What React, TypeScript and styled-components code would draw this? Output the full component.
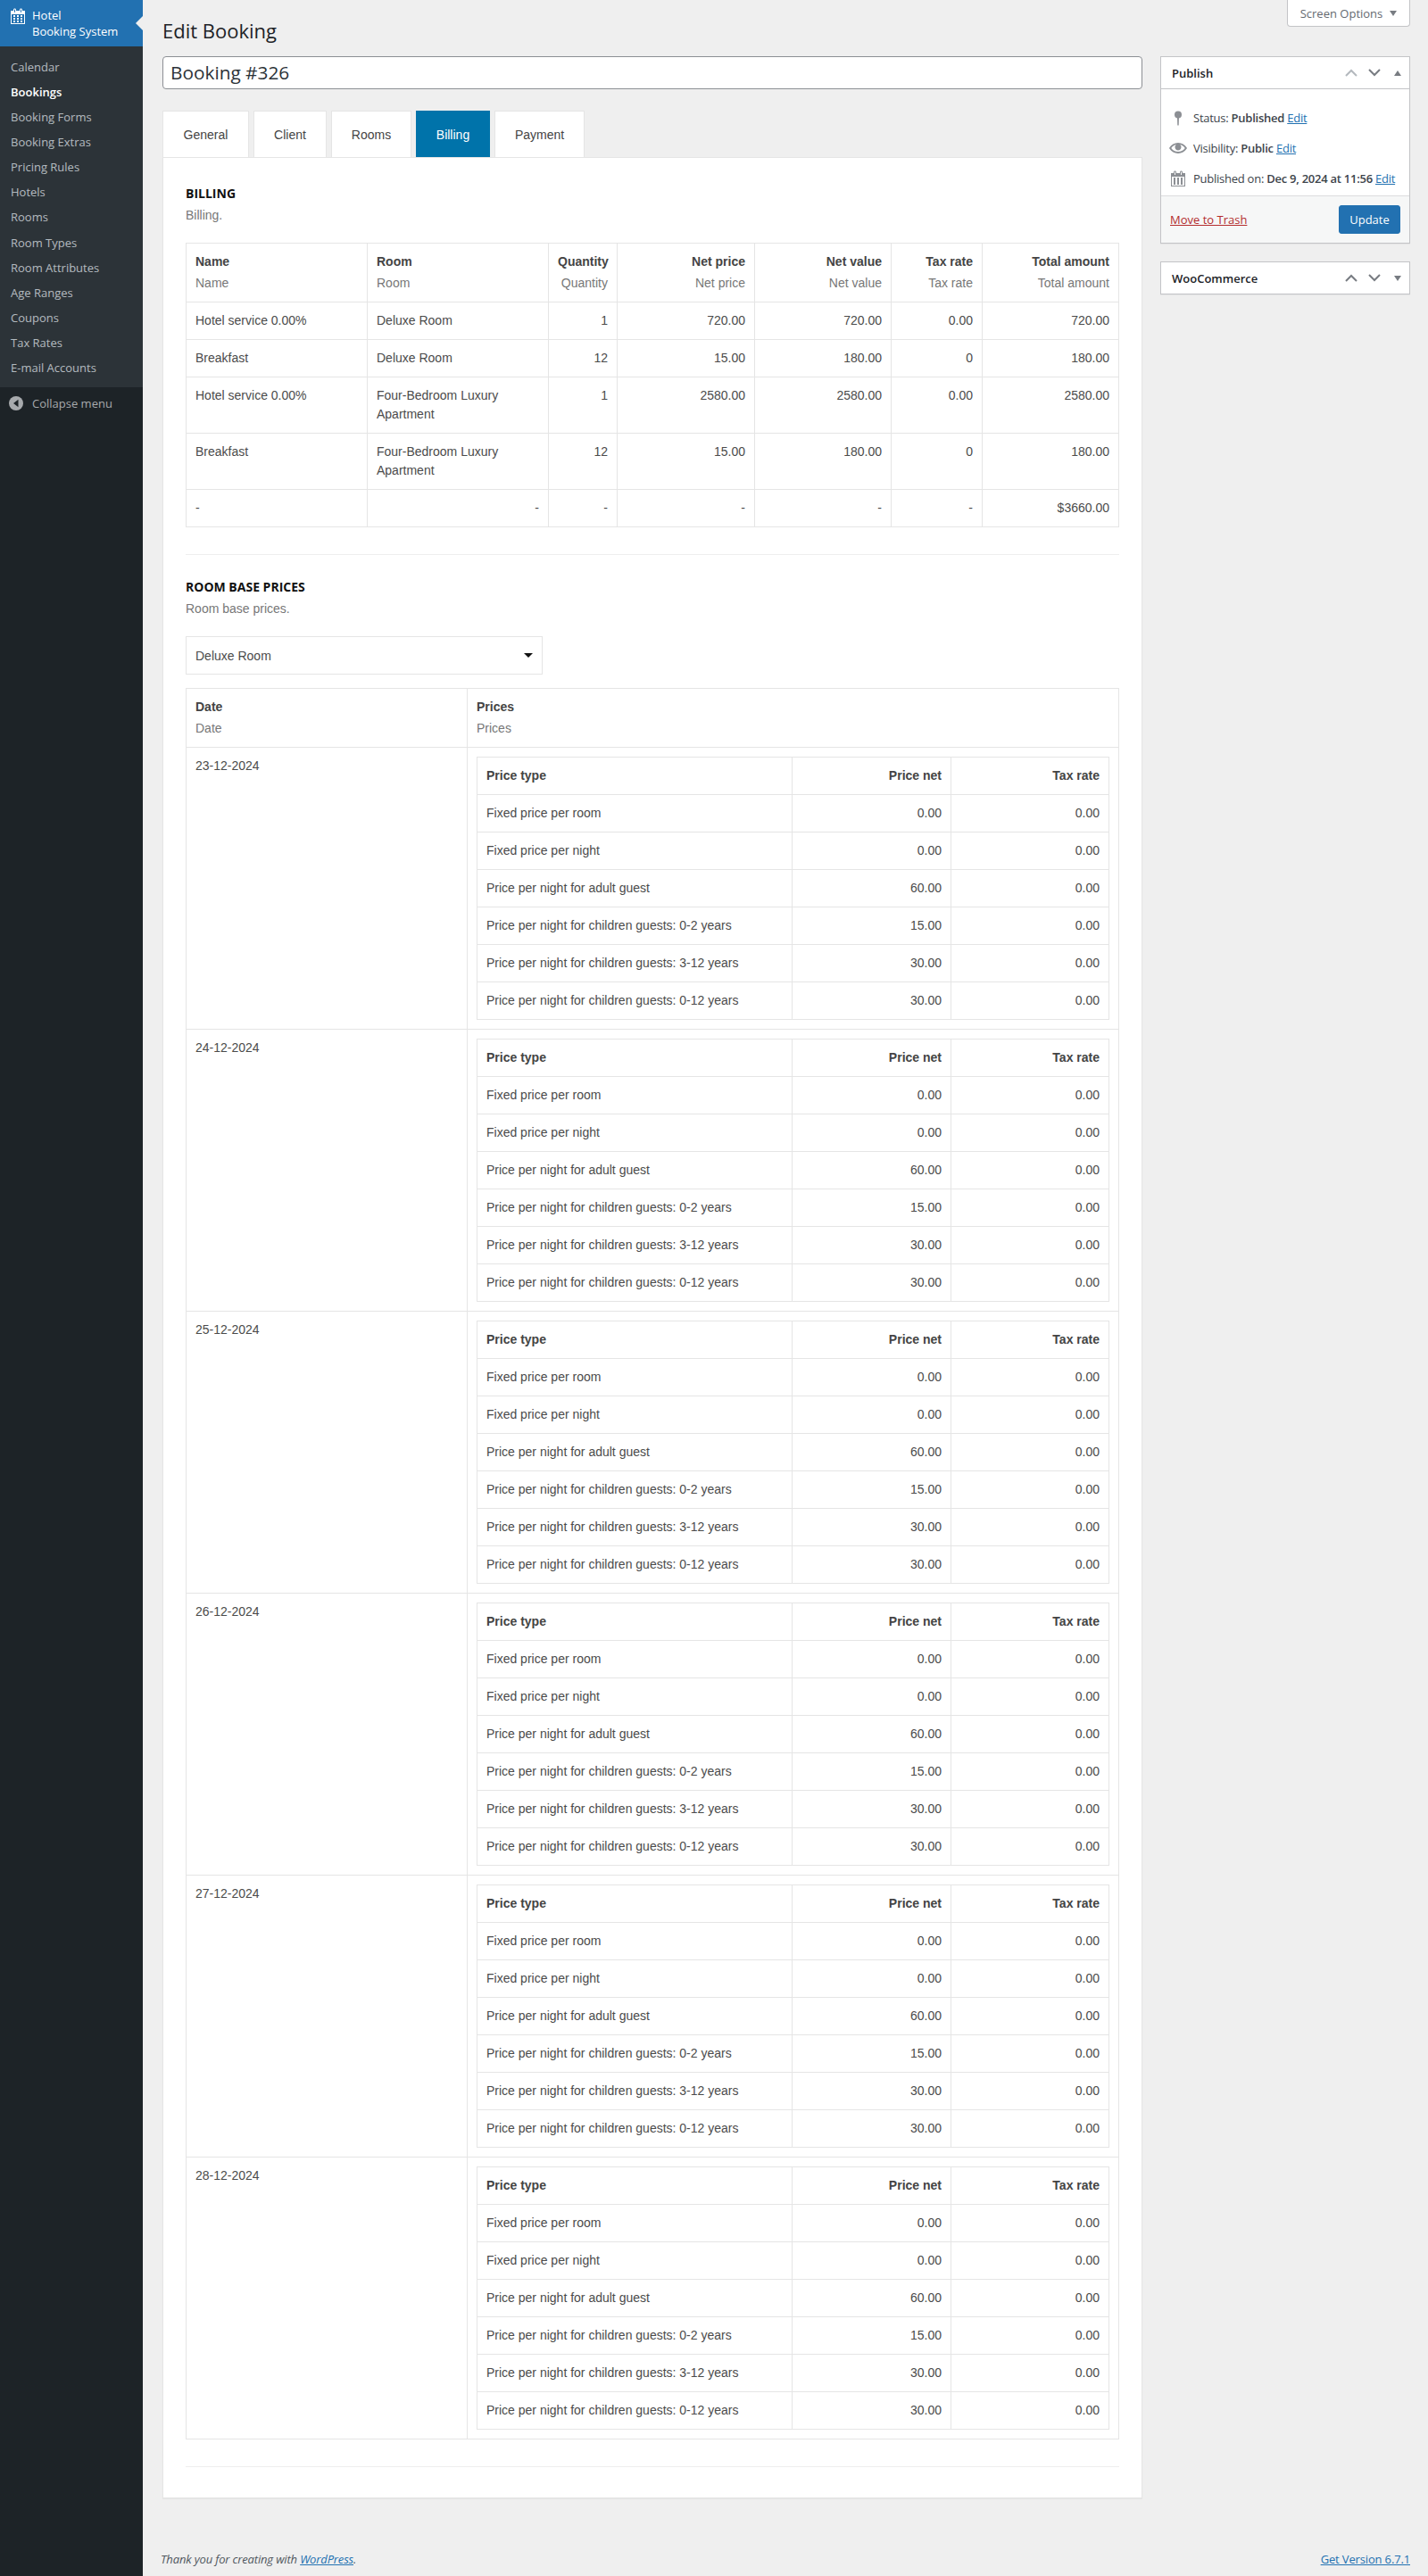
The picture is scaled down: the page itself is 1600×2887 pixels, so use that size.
import React from "react";
import styled, { createGlobalStyle } from "styled-components";

const OPEN = `"Open Sans", "Noto Sans", sans-serif`;
const ARIAL = `"Liberation Sans", Arial, sans-serif`;

const GlobalStyle = createGlobalStyle`
  html, body { margin: 0; padding: 0; background: #efefef; }
  body { font-family: ${OPEN}; font-size: 13px; color: #3c434a; }
  * { box-sizing: border-box; }
  a { color: #2271b1; }
`;

const menuItems = [
  "Calendar",
  "Bookings",
  "Booking Forms",
  "Booking Extras",
  "Pricing Rules",
  "Hotels",
  "Rooms",
  "Room Types",
  "Room Attributes",
  "Age Ranges",
  "Coupons",
  "Tax Rates",
  "E-mail Accounts",
];

const billingRows = [
  ["Hotel service 0.00%", "Deluxe Room", "1", "720.00", "720.00", "0.00", "720.00"],
  ["Breakfast", "Deluxe Room", "12", "15.00", "180.00", "0", "180.00"],
  ["Hotel service 0.00%", "Four-Bedroom Luxury Apartment", "1", "2580.00", "2580.00", "0.00", "2580.00"],
  ["Breakfast", "Four-Bedroom Luxury Apartment", "12", "15.00", "180.00", "0", "180.00"],
  ["-", "-", "-", "-", "-", "-", "$3660.00"],
];

const billingHead = ["Name", "Room", "Quantity", "Net price", "Net value", "Tax rate", "Total amount"];
const billingWidths = [203, 203, 77, 154, 153, 102, 153];

const priceRows = [
  ["Fixed price per room", "0.00", "0.00"],
  ["Fixed price per night", "0.00", "0.00"],
  ["Price per night for adult guest", "60.00", "0.00"],
  ["Price per night for children guests: 0-2 years", "15.00", "0.00"],
  ["Price per night for children guests: 3-12 years", "30.00", "0.00"],
  ["Price per night for children guests: 0-12 years", "30.00", "0.00"],
];

const dates = ["23-12-2024", "24-12-2024", "25-12-2024", "26-12-2024", "27-12-2024", "28-12-2024"];

function CalendarIcon({ size, color }: { size: number; color: string }) {
  return (
    <svg width={size} height={size} viewBox="0 0 20 20" fill={color}>
      <path d="M15 4h3v15H2V4h3V3c0-.41.15-.76.44-1.06.29-.29.65-.44 1.06-.44s.77.15 1.06.44c.29.3.44.65.44 1.06v1h4V3c0-.41.15-.76.44-1.06.29-.29.65-.44 1.06-.44s.77.15 1.06.44c.29.3.44.65.44 1.06v1zM6 3v2.5c0 .14.05.26.15.36.09.09.21.14.35.14s.26-.05.35-.14c.1-.1.15-.22.15-.36V3c0-.14-.05-.26-.15-.35-.09-.1-.21-.15-.35-.15s-.26.05-.35.15c-.1.09-.15.21-.15.35zm7 0v2.5c0 .14.05.26.14.36.1.09.22.14.36.14s.26-.05.36-.14c.09-.1.14-.22.14-.36V3c0-.14-.05-.26-.14-.35-.1-.1-.22-.15-.36-.15s-.26.05-.36.15c-.09.09-.14.21-.14.35zm4 15V8H3v10h14zM7 9v2H5V9h2zm2 0h2v2H9V9zm4 2V9h2v2h-2zm-6 1v2H5v-2h2zm2 0h2v2H9v-2zm4 2v-2h2v2h-2zm-6 1v2H5v-2h2zm4 2H9v-2h2v2zm4 0h-2v-2h2v2z" />
    </svg>
  );
}

function Chevron({ up, faded }: { up?: boolean; faded?: boolean }) {
  return (
    <svg width="14" height="9" viewBox="0 0 14 9" fill="none">
      <path
        d={up ? "M1 8l6-6 6 6" : "M1 1l6 6 6-6"}
        stroke={faded ? "#b4b9be" : "#787c82"}
        strokeWidth="2"
      />
    </svg>
  );
}

function Caret({ up, width = 8 }: { up?: boolean; width?: number }) {
  const x = (width - 8) / 2;
  return (
    <svg width={width} height="6" viewBox={`${-x} 0 ${width} 6`} fill="#787c82">
      <path d={up ? "M0 6l4-6 4 6z" : "M0 0l4 6 4-6z"} />
    </svg>
  );
}

export default function App() {
  return (
    <Page>
      <GlobalStyle />
      <Sidebar>
        <ActiveMenu>
          <CalendarIcon size={20} color="#fff" />
          <div>
            Hotel
            <br />
            Booking System
          </div>
        </ActiveMenu>
        <SubMenu>
          {menuItems.map((item) => (
            <SubItem key={item} $current={item === "Bookings"}>
              {item}
            </SubItem>
          ))}
        </SubMenu>
        <Collapse>
          <svg width="16" height="16" viewBox="0 0 16 16">
            <circle cx="8" cy="8" r="8" fill="#a7aaad" />
            <path d="M10.5 3.8v8.4L5 8z" fill="#1d2327" />
          </svg>
          <span>Collapse menu</span>
        </Collapse>
      </Sidebar>

      <Main>
        <ScreenOptionsRow>
          <ScreenOptions>
            Screen Options
            <Caret />
          </ScreenOptions>
        </ScreenOptionsRow>
        <Columns>
          <Content>
            <Heading>Edit Booking</Heading>
            <TitleInput>Booking #326</TitleInput>
            <Tabs>
              <Tab $width={97}>General</Tab>
              <Tab $width={82}>Client</Tab>
              <Tab $width={90}>Rooms</Tab>
              <Tab $width={83} $active>Billing</Tab>
              <Tab $width={101}>Payment</Tab>
            </Tabs>
            <Panel>
              <SectionTitle>BILLING</SectionTitle>
              <SectionNote>Billing.</SectionNote>
              <DataTable>
                <colgroup>
                  {billingWidths.map((w, i) => (
                    <col key={i} style={{ width: w }} />
                  ))}
                </colgroup>
                <thead>
                  <tr>
                    {billingHead.map((h, i) => (
                      <HeadCell key={h} $right={i > 1}>
                        <strong>{h}</strong>
                        <small>{h}</small>
                      </HeadCell>
                    ))}
                  </tr>
                </thead>
                <tbody>
                  {billingRows.map((row, r) => (
                    <tr key={r}>
                      {row.map((c, i) => (
                        <Cell key={i} $right={i > 1 || (r === 4 && i === 1)}>
                          {c}
                        </Cell>
                      ))}
                    </tr>
                  ))}
                </tbody>
              </DataTable>
              <Divider />
              <SectionTitle>ROOM BASE PRICES</SectionTitle>
              <SectionNote>Room base prices.</SectionNote>
              <RoomSelect>
                Deluxe Room
                <svg width="10" height="5" viewBox="0 0 10 5" fill="#111">
                  <path d="M0 0h10L5 5z" />
                </svg>
              </RoomSelect>
              <DataTable>
                <colgroup>
                  <col style={{ width: 315 }} />
                  <col />
                </colgroup>
                <thead>
                  <tr>
                    <HeadCell>
                      <strong>Date</strong>
                      <small>Date</small>
                    </HeadCell>
                    <HeadCell>
                      <strong>Prices</strong>
                      <small>Prices</small>
                    </HeadCell>
                  </tr>
                </thead>
                <tbody>
                  {dates.map((d) => (
                    <tr key={d}>
                      <Cell>{d}</Cell>
                      <Cell>
                        <DataTable>
                          <colgroup>
                            <col />
                            <col style={{ width: 178 }} />
                            <col style={{ width: 177 }} />
                          </colgroup>
                          <thead>
                            <tr>
                              <Cell as="th">Price type</Cell>
                              <Cell as="th" $right>Price net</Cell>
                              <Cell as="th" $right>Tax rate</Cell>
                            </tr>
                          </thead>
                          <tbody>
                            {priceRows.map((p) => (
                              <tr key={p[0]}>
                                <Cell>{p[0]}</Cell>
                                <Cell $right>{p[1]}</Cell>
                                <Cell $right>{p[2]}</Cell>
                              </tr>
                            ))}
                          </tbody>
                        </DataTable>
                      </Cell>
                    </tr>
                  ))}
                </tbody>
              </DataTable>
              <Divider />
            </Panel>
          </Content>
          <Side>
            <Box>
              <BoxHeader>
                <BoxTitle>Publish</BoxTitle>
                <BoxControls>
                  <Chevron up faded />
                  <Chevron />
                  <Caret up width={14} />
                </BoxControls>
              </BoxHeader>
              <BoxBody>
                <MetaRow>
                  <MetaIcon>
                    <svg width="20" height="20" viewBox="0 0 20 20" fill="#8c8f94">
                      <circle cx="10" cy="6.5" r="4" />
                      <path d="M9 9h2l-.3 9.5h-1.4z" />
                    </svg>
                  </MetaIcon>
                  <span>
                    Status: <b>Published</b> <a href="#e">Edit</a>
                  </span>
                </MetaRow>
                <MetaRow>
                  <MetaIcon>
                    <svg width="20" height="20" viewBox="0 0 20 20" fill="#8c8f94">
                      <path d="M19.7 9.4C17.7 6 14 3.9 10 3.9S2.3 6 .3 9.4L0 10l.3.6c2 3.4 5.7 5.5 9.7 5.5s7.7-2.1 9.7-5.5l.3-.6-.3-.6zM10 14.1c-3.1 0-6-1.6-7.7-4.1C3.6 8 5.7 6.6 8 6.1c-.9.6-1.5 1.7-1.5 2.9 0 1.9 1.6 3.5 3.5 3.5s3.5-1.6 3.5-3.5c0-1.2-.6-2.3-1.5-2.9 2.3.5 4.4 1.9 5.7 3.9-1.7 2.5-4.6 4.1-7.7 4.1z" />
                    </svg>
                  </MetaIcon>
                  <span>
                    Visibility: <b>Public</b> <a href="#e">Edit</a>
                  </span>
                </MetaRow>
                <MetaRow>
                  <MetaIcon>
                    <svg width="20" height="20" viewBox="0 0 20 20" fill="#8c8f94">
                      <path d="M15 4h3v15H2V4h3V3c0-.41.15-.76.44-1.06.29-.29.65-.44 1.06-.44s.77.15 1.06.44c.29.3.44.65.44 1.06v1h4V3c0-.41.15-.76.44-1.06.29-.29.65-.44 1.06-.44s.77.15 1.06.44c.29.3.44.65.44 1.06v1zM6 3v2.5a.5.5 0 0 0 1 0V3a.5.5 0 0 0-1 0zm7 0v2.5a.5.5 0 0 0 1 0V3a.5.5 0 0 0-1 0zm4 15V8H3v10h14zM5 9h2v8H5zm4 0h2v8H9zm4 0h2v8h-2z" />
                    </svg>
                  </MetaIcon>
                  <span>
                    Published on: <b>Dec 9, 2024 at 11:56</b> <a href="#e">Edit</a>
                  </span>
                </MetaRow>
              </BoxBody>
              <BoxActions>
                <TrashLink href="#t">Move to Trash</TrashLink>
                <UpdateButton>Update</UpdateButton>
              </BoxActions>
            </Box>
            <Box>
              <BoxHeader>
                <BoxTitle>WooCommerce</BoxTitle>
                <BoxControls>
                  <Chevron up />
                  <Chevron />
                  <Caret width={14} />
                </BoxControls>
              </BoxHeader>
            </Box>
          </Side>
        </Columns>
        <Footer>
          <em>
            Thank you for creating with <a href="#w">WordPress</a>.
          </em>
          <a href="#v">Get Version 6.7.1</a>
        </Footer>
      </Main>
    </Page>
  );
}

const Page = styled.div`
  width: 1600px;
  height: 2887px;
  display: flex;
  overflow: hidden;
  background: #efefef;
`;

const Sidebar = styled.aside`
  width: 160px;
  flex: none;
  background: #1d2327;
`;

const ActiveMenu = styled.div`
  position: relative;
  height: 52px;
  padding: 8px 0 0 10px;
  display: flex;
  gap: 6px;
  background: #2271b1;
  color: #fff;
  font-size: 13px;
  line-height: 18px;

  &::after {
    content: "";
    position: absolute;
    right: 0;
    top: 18px;
    border: 8px solid transparent;
    border-right-color: #efefef;
    border-left: 0;
  }
`;

const SubMenu = styled.ul`
  margin: 0;
  padding: 9px 0 8px;
  list-style: none;
  background: #2c3338;
`;

const SubItem = styled.li<{ $current?: boolean }>`
  padding: 5px 12px;
  height: 28.08px;
  font-size: 13px;
  line-height: 18px;
  color: ${(p) => (p.$current ? "#fff" : "rgba(240,246,252,.7)")};
  font-weight: ${(p) => (p.$current ? 600 : 400)};
`;

const Collapse = styled.div`
  display: flex;
  align-items: center;
  gap: 10px;
  height: 36px;
  padding: 0 0 0 10px;
  color: #a7aaad;
  font-size: 13px;
`;

const Main = styled.main`
  width: 1440px;
  padding: 0 20px;
  display: flex;
  flex-direction: column;
`;

const ScreenOptionsRow = styled.div`
  display: flex;
  justify-content: flex-end;
  height: 0;
`;

const ScreenOptions = styled.div`
  height: 30px;
  width: 138px;
  display: flex;
  align-items: center;
  justify-content: center;
  gap: 8px;
  background: #fff;
  border: 1px solid #c3c4c7;
  border-top: 0;
  border-radius: 0 0 4px 4px;
  font-size: 13px;
  color: #646970;
  position: relative;
  z-index: 1;
`;

const Columns = styled.div`
  display: flex;
  gap: 20px;
  align-items: flex-start;
`;

const Content = styled.div`
  width: 1098px;
  margin-left: 2px;
  flex: none;
`;

const Heading = styled.h1`
  margin: 0;
  padding: 20px 0 0;
  height: 63px;
  font-size: 22px;
  line-height: 29px;
  font-weight: 400;
  color: #1d2327;
`;

const TitleInput = styled.div`
  height: 37px;
  padding: 0 8px;
  background: #fff;
  border: 1px solid #8c8f94;
  border-radius: 4px;
  font-size: 20.8px;
  line-height: 35px;
  color: #2c3338;
`;

const Tabs = styled.div`
  margin-top: 24px;
  display: flex;
  gap: 5px;
`;

const Tab = styled.div<{ $width: number; $active?: boolean }>`
  width: ${(p) => p.$width}px;
  height: 52px;
  display: flex;
  align-items: center;
  justify-content: center;
  font-family: ${ARIAL};
  font-size: 14px;
  color: ${(p) => (p.$active ? "#fff" : "#444")};
  background: ${(p) => (p.$active ? "#0073aa" : "#fff")};
  border: 1px solid ${(p) => (p.$active ? "#0073aa" : "#e5e5e5")};
  border-bottom: 0;
`;

const Panel = styled.section`
  height: 2624px;
  padding: 30px 25px 0 25px;
  background: #fff;
  border: 1px solid #e5e5e5;
  box-shadow: 0 1px 1px rgba(0, 0, 0, 0.04);
`;

const SectionTitle = styled.h3`
  margin: 0;
  font-size: 14px;
  line-height: 20px;
  font-weight: 700;
  color: #111;
`;

const SectionNote = styled.div`
  margin-top: 4px;
  font-family: ${ARIAL};
  font-size: 14px;
  line-height: 21px;
  color: #777;
`;

const DataTable = styled.table`
  width: 100%;
  margin: 20px 0 0;
  border-collapse: collapse;
  table-layout: fixed;
  font-family: ${ARIAL};
  font-size: 14px;
  line-height: 21px;
  color: #4b4b4b;

  & & {
    margin: 0;
  }
`;

const Cell = styled.td<{ $right?: boolean }>`
  padding: 10px;
  border: 1px solid #e5e5e5;
  vertical-align: top;
  text-align: ${(p) => (p.$right ? "right" : "left")};
  font-weight: 400;

  th& {
    font-weight: 700;
    color: #444;
  }
`;

const HeadCell = styled.th<{ $right?: boolean }>`
  padding: 10px;
  border: 1px solid #e5e5e5;
  vertical-align: top;
  text-align: ${(p) => (p.$right ? "right" : "left")};
  font-weight: 400;

  strong {
    display: block;
    font-weight: 700;
    color: #444;
  }

  small {
    display: block;
    margin-top: 3px;
    font-size: 14px;
    color: #777;
  }
`;

const Divider = styled.hr`
  margin: 30px 0 26px;
  border: 0;
  border-top: 1px solid #eee;
`;

const RoomSelect = styled.div`
  width: 400px;
  height: 43px;
  margin-top: 20px;
  padding: 0 10px;
  display: flex;
  align-items: center;
  justify-content: space-between;
  border: 1px solid #e5e5e5;
  font-family: ${ARIAL};
  font-size: 14px;
  color: #4b4b4b;

  & + table {
    margin-top: 15px;
  }
`;

const Side = styled.div`
  width: 280px;
  flex: none;
  padding-top: 63px;
  display: flex;
  flex-direction: column;
  gap: 20px;
`;

const Box = styled.div`
  background: #fff;
  border: 1px solid #c3c4c7;
  box-shadow: 0 1px 1px rgba(0, 0, 0, 0.04);
`;

const BoxHeader = styled.div`
  height: 35px;
  padding: 0 6px 0 12px;
  display: flex;
  align-items: center;
  justify-content: space-between;
`;

const BoxTitle = styled.h2`
  margin: 0;
  font-size: 13px;
  font-weight: 600;
  color: #1d2327;
`;

const BoxControls = styled.div`
  display: flex;
  align-items: center;
  gap: 12px;
`;

const BoxBody = styled.div`
  padding: 15px 0 2px;
  border-top: 1px solid #c3c4c7;
`;

const MetaRow = styled.div`
  height: 34px;
  padding: 0 0 0 9px;
  display: flex;
  align-items: center;
  gap: 7px;
  font-size: 13px;
  line-height: 1.4;
  letter-spacing: -0.25px;
  white-space: nowrap;

  b {
    font-weight: 600;
  }
`;

const MetaIcon = styled.span`
  width: 20px;
  height: 20px;
  flex: none;
  display: flex;
`;

const BoxActions = styled.div`
  height: 53px;
  padding: 0 10px;
  display: flex;
  align-items: center;
  justify-content: space-between;
  background: #f6f7f7;
  border-top: 1px solid #dcdcde;
`;

const TrashLink = styled.a`
  color: #b32d2e;
  font-size: 13px;
`;

const UpdateButton = styled.button`
  width: 69px;
  height: 32px;
  padding: 0;
  background: #2271b1;
  border: 1px solid #2271b1;
  border-radius: 3px;
  color: #fff;
  font-family: ${OPEN};
  font-size: 13px;
`;

const Footer = styled.footer`
  margin-top: 59px;
  display: flex;
  justify-content: space-between;
  font-size: 13px;
  line-height: 18px;
  letter-spacing: -0.15px;
  color: #50575e;
`;
